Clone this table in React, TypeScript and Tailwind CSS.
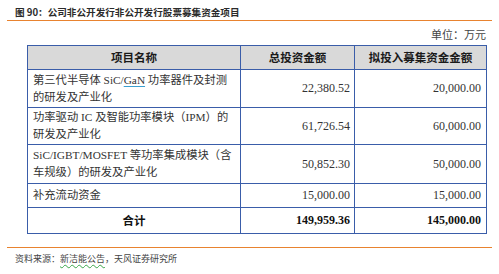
const rows = [
  {
    lines: [
      <>
        第三代半导体 SiC/
        <span className="underline decoration-[#3a9fd0] underline-offset-2">GaN</span> 功率器件及封测
      </>,
      <>的研发及产业化</>,
    ],
    total: "22,380.52",
    raise: "20,000.00",
    h: "h-[38px]",
  },
  {
    lines: [<>功率驱动 IC 及智能功率模块（IPM）的</>, <>研发及产业化</>],
    total: "61,726.54",
    raise: "60,000.00",
    h: "h-[37px]",
  },
  {
    lines: [<>SiC/IGBT/MOSFET 等功率集成模块（含</>, <>车规级）的研发及产业化</>],
    total: "50,852.30",
    raise: "50,000.00",
    h: "h-[39px]",
  },
  {
    lines: [<>补充流动资金</>],
    total: "15,000.00",
    raise: "15,000.00",
    h: "h-[24px]",
  },
];

const serif = "font-['Liberation_Serif','Noto_Sans_CJK_SC',serif]";
const cell = "border-[1.5px] border-[#3a5da9]";

export default function App() {
  return (
    <div className="w-[499px] h-[274px] bg-white font-['Noto_Sans_CJK_SC',sans-serif] text-[#333]">
      <div className="mx-[7px] border-b border-[#e8832f] pt-[6px] pb-[2px] pl-[8px]">
        <p className="text-[9.6px] leading-[12px] font-bold text-[#2b2b2b]">
          图 90：公司非公开发行非公开发行股票募集资金项目
        </p>
      </div>
      <div className={`flex justify-end pr-[13px] pt-[6px] h-[24px] text-[11px] leading-[16px] text-[#444] ${serif}`}>
        单位：万元
      </div>
      <table className={`ml-[27px] w-[459px] table-fixed border-collapse ${serif} text-[12px] leading-[17px] text-[#333]`}>
        <colgroup>
          <col className="w-[213px]" />
          <col className="w-[114px]" />
          <col className="w-[132px]" />
        </colgroup>
        <thead>
          <tr className="h-[24px] bg-[#d9d9d9] font-['Noto_Sans_CJK_SC',sans-serif] text-[11.5px] text-[#1a1a1a]">
            <th className={`${cell} font-bold`}>项目名称</th>
            <th className={`${cell} font-bold`}>总投资金额</th>
            <th className={`${cell} font-bold`}>拟投入募集资金金额</th>
          </tr>
        </thead>
        <tbody>
          {rows.map((r, i) => (
            <tr key={i} className={r.h}>
              <td className={`${cell} pl-[5px] text-[11.3px]`}>
                {r.lines.map((l, j) => (
                  <div key={j} className="whitespace-nowrap overflow-hidden">
                    {l}
                  </div>
                ))}
              </td>
              <td className={`${cell} pr-[4px] text-right`}>{r.total}</td>
              <td className={`${cell} pr-[5px] text-right`}>{r.raise}</td>
            </tr>
          ))}
          <tr className="h-[26px] font-bold text-[#111]">
            <td className={`${cell} text-center font-['Noto_Sans_CJK_SC',sans-serif] text-[11.5px]`}>合计</td>
            <td className={`${cell} pr-[4px] text-right`}>149,959.36</td>
            <td className={`${cell} pr-[5px] text-right`}>145,000.00</td>
          </tr>
        </tbody>
      </table>
      <div className="mx-[7px] mt-[13px] border-t border-[#e8832f] pl-[8px] pt-[4px]">
        <p className="text-[9px] leading-[14px] text-[#444]">
          资料来源：
          <span className="underline decoration-wavy decoration-[#3aa64a] underline-offset-2">新洁能公告</span>
          ，天风证券研究所
        </p>
      </div>
    </div>
  );
}
